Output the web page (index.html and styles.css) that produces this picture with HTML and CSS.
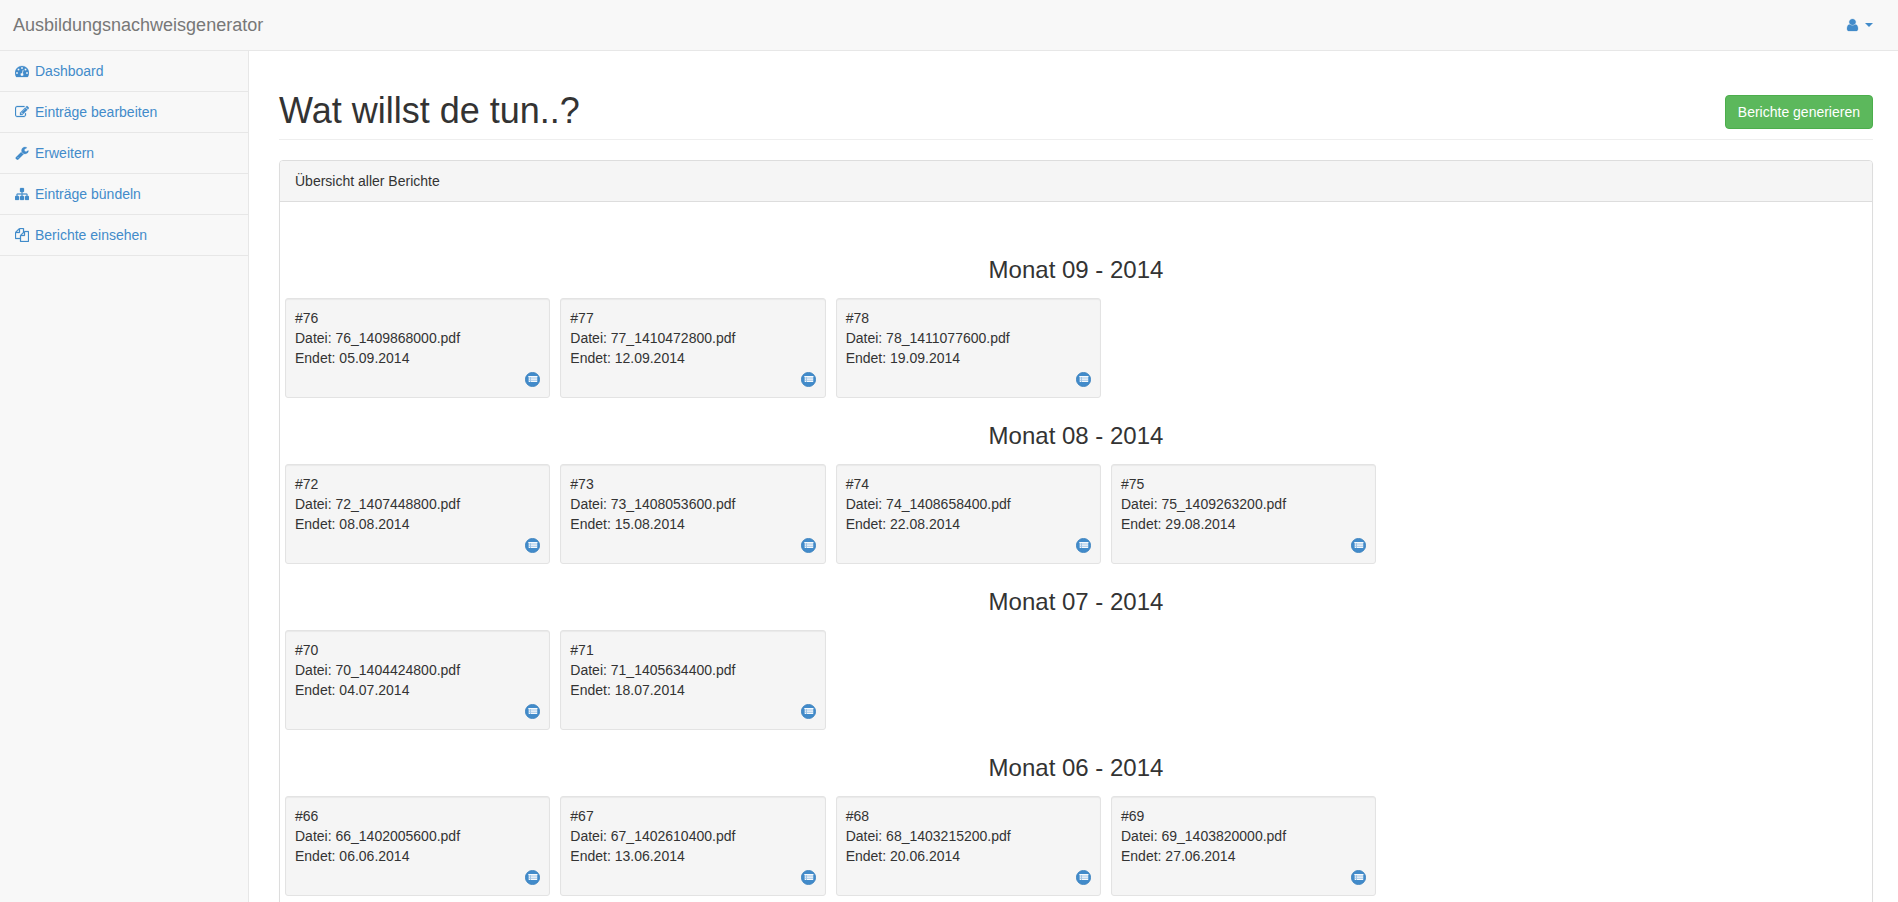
FILE: index.html
```html
<!DOCTYPE html>
<html lang="de">
<head>
<meta charset="utf-8">
<title>Ausbildungsnachweisgenerator</title>
<link rel="stylesheet" href="styles.css">
</head>
<body>
<nav class="navbar">
  <a class="brand">Ausbildungsnachweisgenerator</a>
  <a class="user-menu">
    <svg class="icon icon-user" viewBox="256 128 1280 1536" preserveAspectRatio="none"><path d="M1536 1399q0 109-62.5 187t-150.5 78h-854q-88 0-150.5-78t-62.5-187q0-85 8.5-160.5t31.5-152 58.5-131 94-89 134.5-34.5q131 128 313 128t313-128q76 0 134.5 34.5t94 89 58.5 131 31.5 152 8.5 160.5zm-256-887q0 159-112.5 271.5t-271.5 112.5-271.5-112.5-112.5-271.5 112.5-271.5 271.5-112.5 271.5 112.5 112.5 271.5z"/></svg>
    <span class="caret"></span>
  </a>
</nav>
<div class="layout">
  <aside class="sidebar">
    <a class="side-link"><svg class="icon" viewBox="0 0 1792 1792"><path d="M384 1152q0-53-37.5-90.5t-90.5-37.5-90.5 37.5-37.5 90.5 37.5 90.5 90.5 37.5 90.5-37.5 37.5-90.5zm192-448q0-53-37.5-90.5t-90.5-37.5-90.5 37.5-37.5 90.5 37.5 90.5 90.5 37.5 90.5-37.5 37.5-90.5zm428 481l101-382q6-26-7.5-48.5t-38.5-29.5-48 6.5-30 39.5l-101 382q-60 5-107 43.5t-63 98.5q-20 77 20 146t117 89 146-20 89-117q16-60-6-117t-72-91zm660-33q0-53-37.5-90.5t-90.5-37.5-90.5 37.5-37.5 90.5 37.5 90.5 90.5 37.5 90.5-37.5 37.5-90.5zm-640-640q0-53-37.5-90.5t-90.5-37.5-90.5 37.5-37.5 90.5 37.5 90.5 90.5 37.5 90.5-37.5 37.5-90.5zm448 192q0-53-37.5-90.5t-90.5-37.5-90.5 37.5-37.5 90.5 37.5 90.5 90.5 37.5 90.5-37.5 37.5-90.5zm320 448q0 261-141 483-19 29-54 29h-1402q-35 0-54-29-141-221-141-483 0-182 71-348t191-286 286-191 348-71 348 71 286 191 191 286 71 348z"/></svg>Dashboard</a>
    <a class="side-link"><svg class="icon" viewBox="0 0 1792 1792"><path d="M888 1184l116-116-152-152-116 116v56h96v96h56zm440-720q-16-16-33 1l-350 350q-17 17-1 33t33-1l350-350q17-17 1-33zm80 594v190q0 119-84.5 203.5t-203.5 84.5h-832q-119 0-203.5-84.5t-84.5-203.5v-832q0-119 84.5-203.5t203.5-84.5h832q63 0 117 25 15 7 18 23 3 17-9 29l-49 49q-14 14-32 8-23-6-45-6h-832q-66 0-113 47t-47 113v832q0 66 47 113t113 47h832q66 0 113-47t47-113v-126q0-13 9-22l64-64q15-15 35-7t20 29zm-96-738l288 288-672 672h-288v-288zm444 132l-92 92-288-288 92-92q28-28 68-28t68 28l152 152q28 28 28 68t-28 68z"/></svg>Einträge bearbeiten</a>
    <a class="side-link"><svg class="icon" viewBox="0 0 1792 1792"><path d="M448 1472q0-26-19-45t-45-19-45 19-19 45 19 45 45 19 45-19 19-45zm644-420l-682 682q-37 37-90 37-52 0-91-37l-106-108q-38-36-38-90 0-53 38-91l681-681q39 98 114.5 173.5t173.5 114.5zm634-435q0 39-23 106-47 134-164.5 217.5t-258.5 83.5q-185 0-316.5-131.5t-131.5-316.5 131.5-316.5 316.5-131.5q58 0 121.5 16.5t107.5 46.5q16 11 16 28t-16 28l-293 169v224l193 107q5-3 79-48.5t135.5-81 70.5-35.5q15 0 23.5 10t8.5 25z"/></svg>Erweitern</a>
    <a class="side-link"><svg class="icon" viewBox="0 0 1792 1792"><path d="M1792 1248v320q0 40-28 68t-68 28h-320q-40 0-68-28t-28-68v-320q0-40 28-68t68-28h96v-192h-512v192h96q40 0 68 28t28 68v320q0 40-28 68t-68 28h-320q-40 0-68-28t-28-68v-320q0-40 28-68t68-28h96v-192h-512v192h96q40 0 68 28t28 68v320q0 40-28 68t-68 28h-320q-40 0-68-28t-28-68v-320q0-40 28-68t68-28h96v-192q0-52 38-90t90-38h512v-192h-96q-40 0-68-28t-28-68v-320q0-40 28-68t68-28h320q40 0 68 28t28 68v320q0 40-28 68t-68 28h-96v192h512q52 0 90 38t38 90v192h96q40 0 68 28t28 68z"/></svg>Einträge bündeln</a>
    <a class="side-link"><svg class="icon" viewBox="0 0 1792 1792"><path d="M1696 384q40 0 68 28t28 68v1216q0 40-28 68t-68 28h-960q-40 0-68-28t-28-68v-288h-544q-40 0-68-28t-28-68v-672q0-40 20-88t48-76l408-408q28-28 76-48t88-20h416q40 0 68 28t28 68v328q68-40 128-40h416zm-544 213l-299 299h299v-299zm-640-384l-299 299h299v-299zm196 647l316-316v-416h-384v416q0 40-28 68t-68 28h-416v640h512v-256q0-40 20-88t48-76zm956 804v-1152h-384v416q0 40-28 68t-68 28h-416v640h896z"/></svg>Berichte einsehen</a>
  </aside>
  <main class="content">
    <header class="page-header">
      <h1>Wat willst de tun..?</h1>
      <button class="btn-success">Berichte generieren</button>
    </header>
    <section class="panel">
      <div class="panel-heading">Übersicht aller Berichte</div>
      <div class="panel-body" id="reports"></div>
    </section>
  </main>
</div>
<script src="reports.js"></script>
</body>
</html>
```

FILE: styles.css
```css
* { box-sizing: border-box; }
body {
  margin: 0;
  height: 902px;
  overflow: hidden;
  display: flex;
  flex-direction: column;
  background: #f8f8f8;
  color: #333;
  font: 14px/20px "Liberation Sans", Arial, sans-serif;
}
.navbar {
  flex: none;
  height: 51px;
  display: flex;
  justify-content: space-between;
  align-items: center;
  padding: 0 25px 1px 13px;
  border-bottom: 1px solid #e7e7e7;
}
.brand { font-size: 18px; color: #777; }
.user-menu { display: flex; align-items: center; gap: 7px; color: #428bca; }
.icon {
  width: 14px;
  height: 14px;
  flex: none;
  fill: #428bca;
  stroke: #428bca;
  stroke-width: 30px;
}
.icon-user { width: 11px; height: 12px; overflow: visible; }
.caret {
  border-top: 4px solid #428bca;
  border-left: 4px solid transparent;
  border-right: 4px solid transparent;
}
.layout { flex: 1; min-height: 0; display: flex; }
.sidebar { width: 248px; flex: none; }
.side-link {
  display: flex;
  align-items: center;
  gap: 6px;
  height: 41px;
  padding-left: 15px;
  border-bottom: 1px solid #e7e7e7;
  color: #428bca;
}
.content {
  flex: 1;
  min-width: 0;
  overflow: hidden;
  padding: 0 25px 0 30px;
  border-left: 1px solid #e7e7e7;
  background: #fff;
}
.page-header {
  display: flex;
  justify-content: space-between;
  align-items: flex-start;
  height: 89px;
  margin-bottom: 20px;
  padding-top: 40px;
  border-bottom: 1px solid #eee;
}
h1 { margin: 0; font-size: 36px; line-height: 39px; font-weight: 500; }
.btn-success {
  height: 34px;
  margin-top: 4px;
  padding: 6px 12px;
  border: 1px solid #4cae4c;
  border-radius: 4px;
  background: #5cb85c;
  color: #fff;
  font: inherit;
}
.panel {
  border: 1px solid #ddd;
  border-radius: 4px;
  box-shadow: 0 1px 1px rgba(0, 0, 0, .05);
}
.panel-heading {
  height: 41px;
  padding: 10px 15px;
  border-bottom: 1px solid #ddd;
  border-radius: 3px 3px 0 0;
  background: #f5f5f5;
}
.panel-body { padding: 35px 0; }
.month-title {
  margin: 20px 0 10px;
  font-size: 24px;
  line-height: 26px;
  font-weight: 500;
  text-align: center;
}
.month-row { display: flex; }
.report {
  flex: none;
  display: flex;
  flex-direction: column;
  width: calc(100% / 6);
  height: 100px;
  margin: 5px;
  padding: 9px;
  border: 1px solid #e3e3e3;
  border-radius: 3px;
  background: #f5f5f5;
  box-shadow: inset 0 1px 1px rgba(0, 0, 0, .05);
}
.report-open {
  align-self: flex-end;
  width: 15px;
  height: 15px;
  margin-top: 4px;
}
```

FILE: reports.js
```js
const months = [
  ["09 - 2014", [[76, 1409868000, "05.09.2014"], [77, 1410472800, "12.09.2014"], [78, 1411077600, "19.09.2014"]]],
  ["08 - 2014", [[72, 1407448800, "08.08.2014"], [73, 1408053600, "15.08.2014"], [74, 1408658400, "22.08.2014"], [75, 1409263200, "29.08.2014"]]],
  ["07 - 2014", [[70, 1404424800, "04.07.2014"], [71, 1405634400, "18.07.2014"]]],
  ["06 - 2014", [[66, 1402005600, "06.06.2014"], [67, 1402610400, "13.06.2014"], [68, 1403215200, "20.06.2014"], [69, 1403820000, "27.06.2014"]]]
];

const openIcon = `<svg class="report-open" viewBox="0 0 15 15">
  <circle cx="7.5" cy="7.5" r="7.1" fill="#428bca" stroke="#357ebd" stroke-width=".8"/>
  <path d="M3.4 4h9v6h-9z" fill="#fff" fill-opacity=".5"/>
  <path d="M3.4 4h9v1h-9zM6 5.5h6v1H6zM6 7.2h6v1H6zM6 9h6v1H6zM4 5.5h1v1H4zM4 7.2h1v1H4zM4 9h1v1H4z" fill="#fff" fill-opacity=".9"/>
</svg>`;

document.getElementById("reports").innerHTML = months.map(([name, reports]) => `
  <h3 class="month-title">Monat ${name}</h3>
  <div class="month-row">${reports.map(([id, stamp, end]) => `
    <article class="report">
      <div>#${id}</div>
      <div>Datei: ${id}_${stamp}.pdf</div>
      <div>Endet: ${end}</div>
      ${openIcon}
    </article>`).join("")}
  </div>`).join("");
```
